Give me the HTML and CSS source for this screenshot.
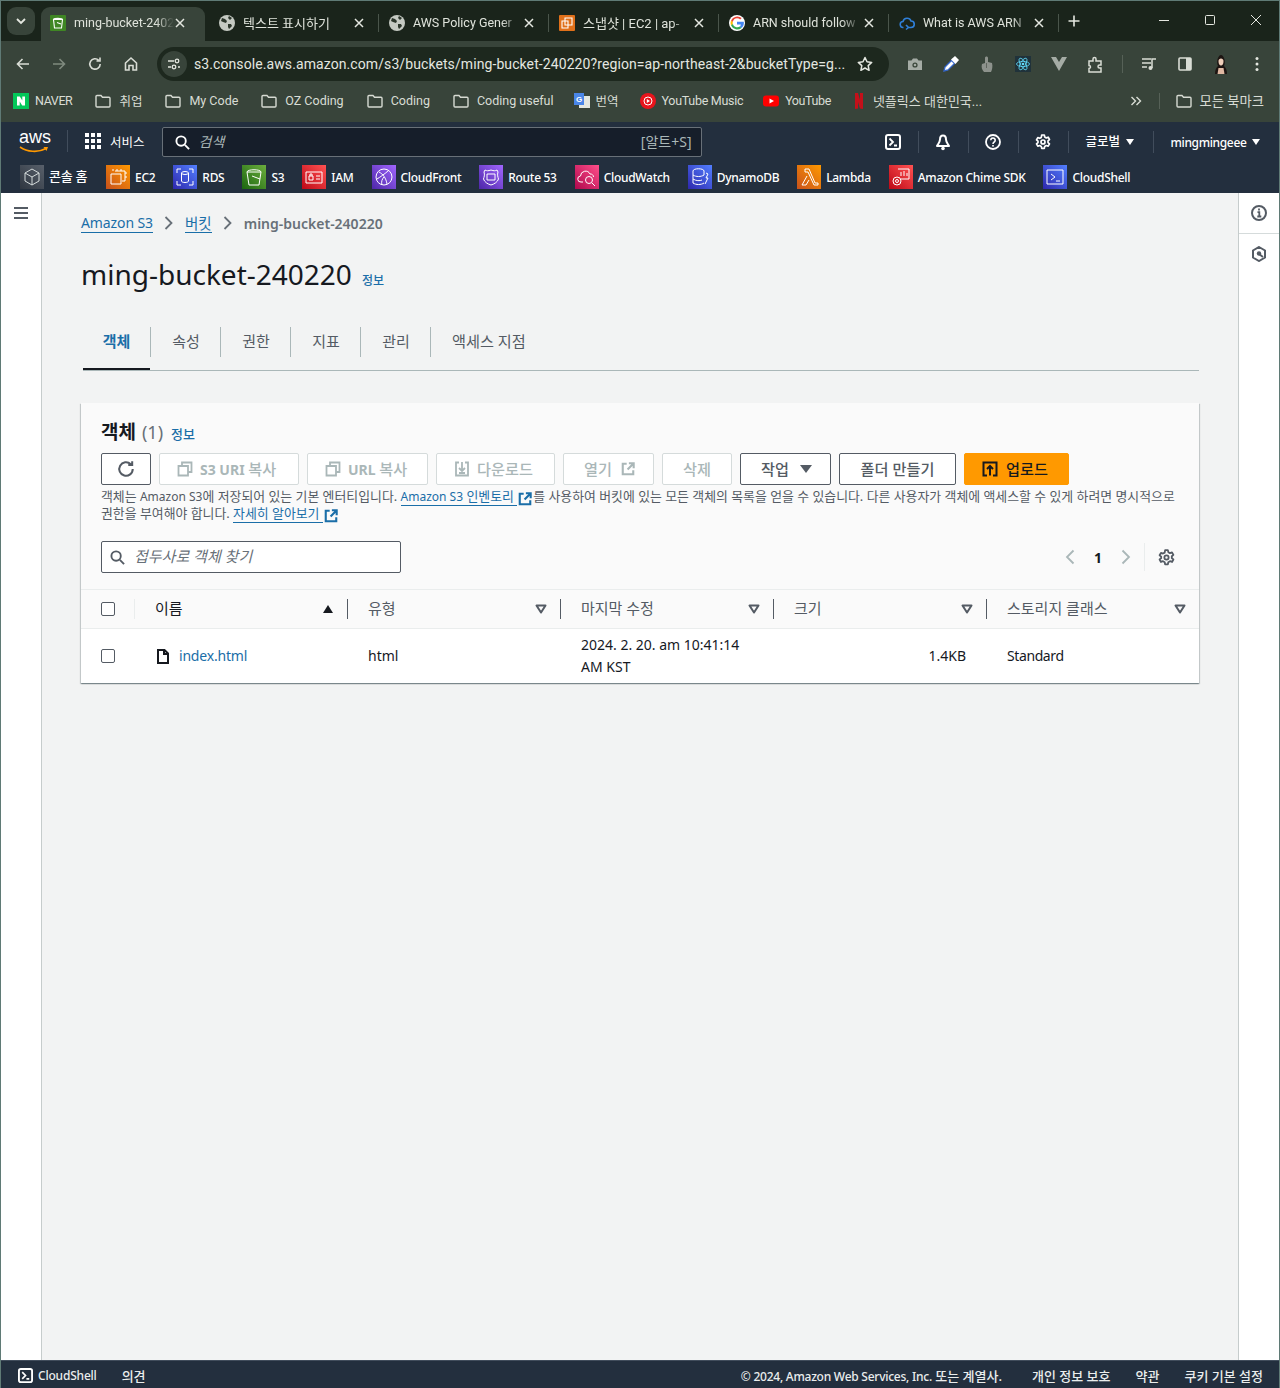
FILE: index.html
```html
<!DOCTYPE html>
<html lang="ko">
<head>
<meta charset="utf-8">
<title>ming-bucket-240220</title>
<link rel="stylesheet" href="styles.css">
</head>
<body>
<svg class="defs" width="0" height="0" aria-hidden="true">
  <defs>
    <symbol id="globe" viewBox="0 0 16 16"><circle cx="8" cy="8" r="8" fill="#c4c9c2"/><path d="M3 3l3 1 2 2-1 2-3-1-2-1zM9 9l3 0 1 2-3 3-1-2z" fill="#2a352a"/><path d="M10 1l3 2-2 2-2-2z" fill="#2a352a"/></symbol>
    <symbol id="folder" viewBox="0 0 16 14"><path d="M1 2.500A1 1 0 0 1 2 1.500h4l1.500 1.800H14a1 1 0 0 1 1 1V12a1 1 0 0 1-1 1H2a1 1 0 0 1-1-1z" fill="none" stroke="#d6dad2" stroke-width="1.400"/></symbol>
    <symbol id="close" viewBox="0 0 12 12"><path d="M2 2l8 8M10 2l-8 8" stroke="#e4e7e0" stroke-width="1.500" fill="none"/></symbol>
    <symbol id="filter" viewBox="0 0 12 10"><path d="M1.500 1.500h9L6 8.500z" fill="none" stroke="#545b64" stroke-width="2" stroke-linejoin="round"/></symbol>
    <symbol id="ext" viewBox="0 0 16 16"><path d="M6.500 2H2v12h12V9.500M9 1.500h5.500V7M14 2L7.500 8.500" fill="none" stroke="currentColor" stroke-width="2.400"/></symbol>
    <symbol id="copy" viewBox="0 0 16 16"><path d="M5 5V1.500h9.500V11H11M1.500 5H11v9.500H1.500z" fill="none" stroke="currentColor" stroke-width="1.800"/></symbol>
    <symbol id="gear" viewBox="0 0 16 16"><path d="M6.700 1h2.600l.4 2 1.600.9 1.900-.7 1.300 2.300-1.500 1.300v1.800l1.500 1.300-1.300 2.300-1.900-.7-1.600.9-.4 2H6.700l-.4-2-1.600-.9-1.900.7-1.300-2.300 1.500-1.300V7.200L1.500 5.900l1.300-2.300 1.900.7 1.600-.9z" fill="none" stroke="currentColor" stroke-width="1.700" stroke-linejoin="round"/><circle cx="8" cy="8" r="2" fill="none" stroke="currentColor" stroke-width="1.700"/></symbol>
    <symbol id="term" viewBox="0 0 16 16"><rect x="1" y="1" width="14" height="14" rx="2" fill="none" stroke="#fff" stroke-width="2"/><path d="M4.500 4.500L8 8l-3.500 3.500M9 11.500h3" fill="none" stroke="#fff" stroke-width="1.800"/></symbol>
  </defs>
</svg>

<div class="app">
  <header class="tabstrip">
    <button class="tab-menu"><svg width="10" height="7" viewBox="0 0 10 7"><path d="M1 1l4 4 4-4" fill="none" stroke="#e4e7e0" stroke-width="1.800"/></svg></button>
    <div class="tab tab-active">
      <svg class="fav" viewBox="0 0 16 16"><rect width="16" height="16" rx="1" fill="#3f8624"/><path d="M3.500 4.500h9L11.500 13h-7zM3.500 4.500c0-1.500 9-1.500 9 0M7 7.500l4 1.500" fill="none" stroke="#fff" stroke-width="1.100"/></svg>
      <span class="tab-title">ming-bucket-2402</span>
      <svg class="tab-x"><use href="#close"/></svg>
    </div>
    <div class="tab tab-first"><svg class="fav"><use href="#globe"/></svg><span class="tab-title tab-ko">텍스트 표시하기</span><svg class="tab-x"><use href="#close"/></svg></div>
    <div class="tab"><svg class="fav"><use href="#globe"/></svg><span class="tab-title">AWS Policy Gener</span><svg class="tab-x"><use href="#close"/></svg></div>
    <div class="tab"><svg class="fav" viewBox="0 0 16 16"><rect width="16" height="16" rx="1" fill="#e0701a"/><path d="M6 3h7v7H6zM3 6h6v7H3z" fill="none" stroke="#fff" stroke-width="1.100"/></svg><span class="tab-title tab-ko">스냅샷 | EC2 | ap-</span><svg class="tab-x"><use href="#close"/></svg></div>
    <div class="tab"><svg class="fav" viewBox="0 0 16 16"><circle cx="8" cy="8" r="8" fill="#fff"/><path d="M8 3.300A4.700 4.700 0 0 1 11.200 4.600L12.700 3.100A7 7 0 0 0 2 5.500L3.800 7A4.700 4.700 0 0 1 8 3.300z" fill="#ea4335"/><path d="M3.800 7L2 5.500a7 7 0 0 0 0 5L3.800 9a4.700 4.700 0 0 1 0-2z" fill="#fbbc05"/><path d="M3.800 9L2 10.500a7 7 0 0 0 10.600 2.400l-1.700-1.400A4.700 4.700 0 0 1 3.800 9z" fill="#34a853"/><path d="M14.800 6.700H8v2.800h3.900a3.400 3.400 0 0 1-1 2l1.700 1.400a7 7 0 0 0 2.200-6.200z" fill="#4285f4"/></svg><span class="tab-title">ARN should follow</span><svg class="tab-x"><use href="#close"/></svg></div>
    <div class="tab"><svg class="fav" viewBox="0 0 16 16"><path d="M4.500 12.500a3 3 0 0 1-.5-6 4.200 4.200 0 0 1 8-.5 3.200 3.200 0 0 1 0 6.500H9.500M7 10l2.500 2.500L7 14.500" fill="none" stroke="#2f7fd8" stroke-width="1.600"/></svg><span class="tab-title">What is AWS ARN</span><svg class="tab-x"><use href="#close"/></svg></div>
    <svg class="tab-plus" viewBox="0 0 16 16"><path d="M8 2.500v11M2.500 8h11" stroke="#e4e7e0" stroke-width="1.600" fill="none"/></svg>
    <div class="win-controls">
      <span class="win-btn"><svg width="12" height="12" viewBox="0 0 12 12"><path d="M1 6.500h10" stroke="#e4e7e0" fill="none"/></svg></span>
      <span class="win-btn"><svg width="12" height="12" viewBox="0 0 12 12"><rect x="1.500" y="1.500" width="9" height="9" rx="1" stroke="#e4e7e0" fill="none"/></svg></span>
      <span class="win-btn"><svg width="12" height="12" viewBox="0 0 12 12"><path d="M1 1l10 10M11 1L1 11" stroke="#e4e7e0" fill="none"/></svg></span>
    </div>
  </header>

  <div class="toolbar">
    <span class="tb-btn"><svg width="16" height="16" viewBox="0 0 16 16"><path d="M14 8H3M7.500 3L2.500 8l5 5" fill="none" stroke="#d9ddd5" stroke-width="1.600"/></svg></span>
    <span class="tb-btn"><svg width="16" height="16" viewBox="0 0 16 16"><path d="M2 8h11M8.500 3l5 5-5 5" fill="none" stroke="#7f8a7e" stroke-width="1.600"/></svg></span>
    <span class="tb-btn"><svg width="16" height="16" viewBox="0 0 16 16"><path d="M13.200 8a5.200 5.200 0 1 1-1.500-3.700M13 1.500v3.500H9.500" fill="none" stroke="#d9ddd5" stroke-width="1.600"/></svg></span>
    <span class="tb-btn"><svg width="16" height="16" viewBox="0 0 16 16"><path d="M2.500 7L8 2l5.500 5v7H10V9.500H6V14H2.500z" fill="none" stroke="#d9ddd5" stroke-width="1.600"/></svg></span>
    <div class="omnibox">
      <span class="site-info"><svg width="14" height="12" viewBox="0 0 14 12"><path d="M1 3h6M1 9h3M11 9h2" stroke="#e4e7e0" stroke-width="1.400" fill="none"/><circle cx="10" cy="3" r="1.800" stroke="#e4e7e0" stroke-width="1.300" fill="none"/><circle cx="7" cy="9" r="1.800" stroke="#e4e7e0" stroke-width="1.300" fill="none"/></svg></span>
      <span class="url">s3.console.aws.amazon.com/s3/buckets/ming-bucket-240220?region=ap-northeast-2&amp;bucketType=g...</span>
      <svg class="star" width="16" height="16" viewBox="0 0 16 16"><path d="M8 1.500l2 4.300 4.700.6-3.500 3.200.9 4.700L8 12l-4.100 2.300.9-4.700L1.300 6.400 6 5.800z" fill="none" stroke="#e4e7e0" stroke-width="1.500" stroke-linejoin="round"/></svg>
    </div>
    <span class="tb-btn"><svg width="16" height="16" viewBox="0 0 16 16"><path d="M1 4.500h3.500L6 2.500h4l1.500 2H15V14H1z" fill="#a5aca5"/><circle cx="8" cy="9" r="2.600" fill="#3a463a"/><circle cx="8" cy="9" r="1.300" fill="#a5aca5"/></svg></span>
    <span class="tb-btn"><svg width="18" height="18" viewBox="0 0 18 18"><path d="M2 16l1-4 6.500-6.500 3 3L6 15z" fill="#fff" stroke="#3566c8" stroke-width="1.300"/><path d="M9 4.500L13 1l4 4-3.500 4z" fill="#fff"/></svg></span>
    <span class="tb-btn"><svg width="14" height="18" viewBox="0 0 14 18"><path d="M5 3c0-2 3-2 3 0v4l4 1c1 3 0 7-1 9H4C2 15 1 12 2 9l3-1z" fill="#8d928c"/><path d="M6.500 8v5" stroke="#5f655e"/></svg></span>
    <span class="tb-btn"><svg width="16" height="16" viewBox="0 0 16 16"><rect width="16" height="16" fill="#20323a"/><g fill="none" stroke="#61dafb" stroke-width=".8"><ellipse cx="8" cy="8" rx="6.500" ry="2.600"/><ellipse cx="8" cy="8" rx="6.500" ry="2.600" transform="rotate(60 8 8)"/><ellipse cx="8" cy="8" rx="6.500" ry="2.600" transform="rotate(120 8 8)"/></g><circle cx="8" cy="8" r="1.300" fill="#61dafb"/></svg></span>
    <span class="tb-btn"><svg width="16" height="14" viewBox="0 0 16 14"><path d="M0 0h5l3 5 3-5h5L8 14z" fill="#a5aca5"/></svg></span>
    <span class="tb-btn"><svg width="17" height="17" viewBox="0 0 17 17"><path d="M2 5h4V3a1.500 1.500 0 0 1 3 0v2h5v4h-1.500a1.500 1.500 0 0 0 0 3H14v4H2v-3.500a1.500 1.500 0 0 0 0-3z" fill="none" stroke="#d9ddd5" stroke-width="1.500"/></svg></span>
    <span class="tb-sep"></span>
    <span class="tb-btn"><svg width="16" height="14" viewBox="0 0 16 14"><path d="M1 2h9M1 6h9M1 10h5" stroke="#d9ddd5" stroke-width="1.500" fill="none"/><path d="M11 11V2h4" stroke="#d9ddd5" stroke-width="1.500" fill="none"/><circle cx="9.500" cy="11" r="2" fill="#d9ddd5"/></svg></span>
    <span class="tb-btn"><svg width="14" height="14" viewBox="0 0 14 14"><rect x="1" y="1" width="12" height="12" rx="1" fill="none" stroke="#d9ddd5" stroke-width="1.600"/><rect x="8" y="1" width="5" height="12" fill="#d9ddd5"/></svg></span>
    <span class="tb-btn"><svg width="18" height="20" viewBox="0 0 18 20"><path d="M3 20c0-4 1-6 3-8-2-4 0-11 3-11s5 7 3 11c2 2 3 4 3 8z" fill="#1d1512"/><path d="M6.500 7c0-3.500 5-3.500 5 0s-1.300 4.500-2.500 4.500S6.500 10.500 6.500 7z" fill="#f0cfba"/><path d="M6.500 14h5l1 6h-7z" fill="#e0b8a2"/></svg></span>
    <span class="tb-btn"><svg width="4" height="16" viewBox="0 0 4 16"><circle cx="2" cy="2.500" r="1.500" fill="#e4e7e0"/><circle cx="2" cy="8" r="1.500" fill="#e4e7e0"/><circle cx="2" cy="13.500" r="1.500" fill="#e4e7e0"/></svg></span>
  </div>

  <nav class="bookmarks">
    <span class="bm bm-first"><svg class="bm-ic" viewBox="0 0 16 16"><rect width="16" height="16" fill="#03c75a"/><path d="M4 3.500h2.800L9.300 7.500v-4H12v9H9.200L6.700 8.500v4H4z" fill="#fff"/></svg>NAVER</span>
    <span class="bm"><svg class="bm-ic"><use href="#folder"/></svg>취업</span>
    <span class="bm"><svg class="bm-ic"><use href="#folder"/></svg>My Code</span>
    <span class="bm"><svg class="bm-ic"><use href="#folder"/></svg>OZ Coding</span>
    <span class="bm"><svg class="bm-ic"><use href="#folder"/></svg>Coding</span>
    <span class="bm"><svg class="bm-ic"><use href="#folder"/></svg>Coding useful</span>
    <span class="bm bm-tight bm-translate"><svg class="bm-ic" viewBox="0 0 16 16"><rect x="5" y="3" width="11" height="12" fill="#e4e7e0"/><rect width="10" height="12" fill="#4a86e8"/><text x="2" y="9" font-size="8" fill="#fff" class="svg-g">G</text></svg>번역</span>
    <span class="bm bm-tight bm-ytm"><svg class="bm-ic" viewBox="0 0 16 16"><circle cx="8" cy="8" r="8" fill="#e8141c"/><circle cx="8" cy="8" r="4" fill="none" stroke="#fff"/><path d="M6.800 6v4L10 8z" fill="#fff"/></svg>YouTube Music</span>
    <span class="bm bm-tight bm-yt"><svg class="bm-ic" viewBox="0 0 16 16"><rect y="2.500" width="16" height="11" rx="3" fill="#f00"/><path d="M6.500 5.500v5L11 8z" fill="#fff"/></svg>YouTube</span>
    <span class="bm bm-tight bm-nf"><svg class="bm-ic" viewBox="0 0 16 16"><path d="M4 0h3l2 7V0h3v16l-3-.5L7 9v6.500L4 16z" fill="#c4101a"/></svg>넷플릭스 대한민국...</span>
    <span class="bm-right">
      <svg width="12" height="10" viewBox="0 0 12 10"><path d="M1.500 1l4 4-4 4M6.500 1l4 4-4 4" fill="none" stroke="#d9ddd5" stroke-width="1.400"/></svg>
      <span class="bm-sep"></span>
      <span class="bm bm-all"><svg class="bm-ic"><use href="#folder"/></svg>모든 북마크</span>
    </span>
  </nav>

  <div class="aws-nav">
    <span class="aws-logo">
      <span class="aws-word">aws</span>
      <svg class="aws-smile" width="31" height="8" viewBox="0 0 31 8"><path d="M1 1c7 5 18 6 26 1.500" fill="none" stroke="#f90" stroke-width="1.600"/><path d="M24.500 1l4.500 0-1.500 4z" fill="#f90"/></svg>
    </span>
    <span class="nav-sep nav-sep-logo"></span>
    <span class="services">
      <svg width="16" height="16" viewBox="0 0 16 16" fill="#fff"><rect width="4" height="4"/><rect x="6" width="4" height="4"/><rect x="12" width="4" height="4"/><rect y="6" width="4" height="4"/><rect x="6" y="6" width="4" height="4"/><rect x="12" y="6" width="4" height="4"/><rect y="12" width="4" height="4"/><rect x="6" y="12" width="4" height="4"/><rect x="12" y="12" width="4" height="4"/></svg>
      서비스
    </span>
    <div class="nav-search">
      <svg width="15" height="15" viewBox="0 0 16 16"><circle cx="6.500" cy="6.500" r="5" fill="none" stroke="#fff" stroke-width="2"/><path d="M10.500 10.500L15 15" stroke="#fff" stroke-width="2"/></svg>
      <em class="nav-search-ph">검색</em>
      <span class="nav-search-key">[알트+S]</span>
    </div>
    <div class="nav-right">
      <span class="nav-ic"><svg width="16" height="16"><use href="#term"/></svg></span>
      <span class="nav-ic nav-ic-line"><svg width="16" height="17" viewBox="0 0 16 17"><path d="M8 1.500c2 0 3 2 3 4 0 2.500 2 4.500 3 6.500H2c1-2 3-4 3-6.500 0-2 1-4 3-4z" fill="none" stroke="#fff" stroke-width="2" stroke-linejoin="round"/><circle cx="8" cy="14.500" r="1.800" fill="#fff"/></svg></span>
      <span class="nav-ic nav-ic-line"><svg width="16" height="16" viewBox="0 0 16 16"><circle cx="8" cy="8" r="7" fill="none" stroke="#fff" stroke-width="1.800"/><path d="M5.800 6.200a2.200 2.200 0 1 1 3.400 1.800C8.300 8.600 8 9 8 10" fill="none" stroke="#fff" stroke-width="1.600"/><rect x="7.200" y="11" width="1.600" height="1.600" fill="#fff"/></svg></span>
      <span class="nav-ic nav-ic-line"><svg class="gear-white" width="16" height="16"><use href="#gear"/></svg></span>
      <span class="nav-text nav-region"><span class="nav-region-label">글로벌</span><i class="tri"></i></span>
      <span class="nav-text nav-user">mingmingeee<i class="tri"></i></span>
    </div>
  </div>

  <div class="aws-services">
    <span class="svc"><span class="svc-ic svc-gray"><svg viewBox="0 0 24 24"><path d="M12 4l7 4v8l-7 4-7-4V8zM5 8l7 4 7-4M12 12v8" fill="none" stroke="#d5dbdb"/></svg></span><span class="svc-ko">콘솔 홈</span></span>
    <span class="svc"><span class="svc-ic svc-orange"><svg viewBox="0 0 24 24"><path d="M9 6h10v10h-3M5 9h10v10H5zM7 4v2M11 4v2M15 4v2M21 8h-2M21 12h-2" fill="none" stroke="#fff"/></svg></span>EC2</span>
    <span class="svc"><span class="svc-ic svc-blue"><svg viewBox="0 0 24 24"><ellipse cx="12" cy="8" rx="3.500" ry="1.500" fill="none" stroke="#fff"/><path d="M8.500 8v8c0 2 7 2 7 0V8M4 8V4h4M20 8V4h-4M4 16v4h4M20 16v4h-4" fill="none" stroke="#fff"/></svg></span>RDS</span>
    <span class="svc"><span class="svc-ic svc-green"><svg viewBox="0 0 24 24"><path d="M5 7h14l-2 13H7zM5 7c0-3 14-3 14 0M10 11l8 3" fill="none" stroke="#fff"/></svg></span>S3</span>
    <span class="svc"><span class="svc-ic svc-red"><svg viewBox="0 0 24 24"><path d="M4 7h16v11H4zM7 11h4v4H7zM8 11V9h2v2M14 11h4M14 14h4" fill="none" stroke="#fff"/></svg></span>IAM</span>
    <span class="svc"><span class="svc-ic svc-purple"><svg viewBox="0 0 24 24"><circle cx="12" cy="12" r="8" fill="none" stroke="#fff"/><path d="M7 7c4 2 7 6 8 12M5 14c3-2 8-5 12-9M10 20c-1-3 0-6 2-8" fill="none" stroke="#fff"/></svg></span>CloudFront</span>
    <span class="svc"><span class="svc-ic svc-purple"><svg viewBox="0 0 24 24"><path d="M6 5c2 1 3 1 6 0 3 1 4 1 6 0l1 2c-1 3 0 5 .5 7-1 3-4 5-7.500 6-3.500-1-6.500-3-7.500-6 .5-2 1.500-4 .5-7z" fill="none" stroke="#fff"/><path d="M8 9h8v6H8z" fill="none" stroke="#fff"/></svg></span>Route 53</span>
    <span class="svc"><span class="svc-ic svc-pink"><svg viewBox="0 0 24 24"><path d="M8 17H6a3 3 0 0 1-.5-6 5 5 0 0 1 9.500-2 3 3 0 0 1 3.500 3" fill="none" stroke="#fff"/><circle cx="14" cy="15" r="3.500" fill="none" stroke="#fff"/><path d="M17 18l3 3" stroke="#fff"/></svg></span>CloudWatch</span>
    <span class="svc"><span class="svc-ic svc-blue"><svg viewBox="0 0 24 24"><path d="M5 6c0-3 11-3 11 0v4c-3 2-8 2-11 0zM5 10v8c3 2 8 2 11 0M5 14c3 2 7 2 9 1M18 8l2 1-2 4h2l-3 6" fill="none" stroke="#fff"/></svg></span>DynamoDB</span>
    <span class="svc"><span class="svc-ic svc-orange"><svg viewBox="0 0 24 24"><path d="M8 4h4l6 14h3v2h-4L11 7H8zM10 11l-5 9h4l3-5" fill="none" stroke="#fff"/></svg></span>Lambda</span>
    <span class="svc"><span class="svc-ic svc-red"><svg viewBox="0 0 24 24"><path d="M9 4h11v10h-8M12 7v4M15 6v5M18 8v3" fill="none" stroke="#fff"/><circle cx="8" cy="16" r="4" fill="none" stroke="#fff"/><circle cx="8" cy="16" r="1.500" fill="none" stroke="#fff"/></svg></span>Amazon Chime SDK</span>
    <span class="svc"><span class="svc-ic svc-blue"><svg viewBox="0 0 24 24"><path d="M4 5h16v14H4zM8 9l4 3-4 3M13 16h4" fill="none" stroke="#fff"/></svg></span>CloudShell</span>
  </div>

  <main class="workspace">
    <aside class="side-left">
      <svg width="14" height="12" viewBox="0 0 14 12"><path d="M0 1h14M0 6h14M0 11h14" stroke="#545b64" stroke-width="2"/></svg>
    </aside>
    <section class="content">
      <div class="crumbs">
        <a class="crumb-link crumb-lat">Amazon S3</a>
        <svg class="crumb-sep" width="10" height="14" viewBox="0 0 10 14"><path d="M1.500 1l6 6-6 6" fill="none" stroke="#687078" stroke-width="1.800"/></svg>
        <a class="crumb-link crumb-ko">버킷</a>
        <svg class="crumb-sep" width="10" height="14" viewBox="0 0 10 14"><path d="M1.500 1l6 6-6 6" fill="none" stroke="#687078" stroke-width="1.800"/></svg>
        <span class="crumb-cur">ming-bucket-240220</span>
      </div>
      <div class="page-head">
        <h1>ming-bucket-240220</h1>
        <a class="info">정보</a>
      </div>
      <div class="tabs">
        <span class="pg-tab pg-tab-on">객체</span>
        <span class="pg-tab">속성</span>
        <span class="pg-tab">권한</span>
        <span class="pg-tab">지표</span>
        <span class="pg-tab">관리</span>
        <span class="pg-tab pg-tab-last">액세스 지점</span>
      </div>

      <div class="card">
        <div class="card-head">
          <div class="card-title"><h2>객체</h2><span class="count">(1)</span><a class="info">정보</a></div>
          <div class="actions">
            <button class="btn btn-refresh"><svg width="18" height="18" viewBox="0 0 16 16"><path d="M14 8a6 6 0 1 1-1.800-4.300M13.500 1v3.500H10" fill="none" stroke="#545b64" stroke-width="1.800"/></svg></button>
            <button class="btn btn-off btn-s3"><svg width="16" height="16"><use href="#copy"/></svg><span>S3 URI <span class="ko">복사</span></span></button>
            <button class="btn btn-off btn-url"><svg width="16" height="16"><use href="#copy"/></svg><span>URL <span class="ko">복사</span></span></button>
            <button class="btn btn-off btn-dl"><svg width="16" height="16" viewBox="0 0 16 16"><path d="M5 1.500H2v13h12v-13h-3M8 1v8.500M5 7l3 3 3-3M5 12h6" fill="none" stroke="currentColor" stroke-width="1.800"/></svg><span class="ko">다운로드</span></button>
            <button class="btn btn-off btn-open"><span class="ko">열기</span><svg width="14" height="14"><use href="#ext"/></svg></button>
            <button class="btn btn-off btn-del"><span class="ko">삭제</span></button>
            <button class="btn btn-on btn-act"><span class="ko">작업</span><i class="tri-dark"></i></button>
            <button class="btn btn-on btn-new"><span class="ko">폴더 만들기</span></button>
            <button class="btn btn-primary"><svg width="16" height="16" viewBox="0 0 16 16"><path d="M5 14.500H1.500v-13h13v13H11M8 14.500V5.500M5 8l3-3 3 3" fill="none" stroke="#16191f" stroke-width="2"/></svg><span class="ko">업로드</span></button>
          </div>
          <p class="desc">객체는 <span class="lat">Amazon S3</span>에 저장되어 있는 기본 엔터티입니다. <a><span class="lat">Amazon S3</span> 인벤토리 </a><svg class="ext-ic" width="14" height="14"><use href="#ext"/></svg>를 사용하여 버킷에 있는 모든 객체의 목록을 얻을 수 있습니다. 다른 사용자가 객체에 액세스할 수 있게 하려면 명시적으로 권한을 부여해야 합니다. <a>자세히 알아보기 </a><svg class="ext-ic" width="14" height="14"><use href="#ext"/></svg></p>
          <div class="filter-row">
            <div class="filter-input">
              <svg width="15" height="15" viewBox="0 0 16 16"><circle cx="6.500" cy="6.500" r="5" fill="none" stroke="#545b64" stroke-width="2"/><path d="M10.500 10.500L15 15" stroke="#545b64" stroke-width="2"/></svg>
              <em>접두사로 객체 찾기</em>
            </div>
            <div class="pager">
              <svg width="10" height="16" viewBox="0 0 10 16"><path d="M8.500 1.500L2 8l6.500 6.500" fill="none" stroke="#aab7b8" stroke-width="1.800"/></svg>
              <b class="page-no">1</b>
              <svg width="10" height="16" viewBox="0 0 10 16"><path d="M1.500 1.500L8 8l-6.500 6.500" fill="none" stroke="#aab7b8" stroke-width="1.800"/></svg>
              <span class="pager-sep"></span>
              <svg class="pager-gear" width="16" height="16"><use href="#gear"/></svg>
            </div>
          </div>
        </div>
        <div class="table">
          <div class="tr th">
            <span class="td td-check"><i class="check"></i></span>
            <span class="td td-head td-dark">이름<i class="sort-up"></i></span>
            <span class="td td-head">유형<svg class="flt"><use href="#filter"/></svg></span>
            <span class="td td-head">마지막 수정<svg class="flt"><use href="#filter"/></svg></span>
            <span class="td td-head">크기<svg class="flt"><use href="#filter"/></svg></span>
            <span class="td td-head td-end">스토리지 클래스<svg class="flt"><use href="#filter"/></svg></span>
          </div>
          <div class="tr tb">
            <span class="td td-check"><i class="check"></i></span>
            <span class="td td-name"><svg width="12" height="15" viewBox="0 0 12 15"><path d="M1 1h6.500L11 4.500V14H1zM7 1v4h4" fill="none" stroke="#16191f" stroke-width="2"/></svg><a>index.html</a></span>
            <span class="td td-plain">html</span>
            <span class="td td-date">2024. 2. 20. am 10:41:14<br>AM KST</span>
            <span class="td td-plain td-size">1.4KB</span>
            <span class="td td-plain td-class">Standard</span>
          </div>
        </div>
      </div>
    </section>
    <aside class="side-right">
      <span class="side-cell"><svg width="16" height="16" viewBox="0 0 16 16"><circle cx="8" cy="8" r="7" fill="none" stroke="#545b64" stroke-width="2"/><path d="M8 3.500v2M6.500 7.200H8.300V11.500M6.300 11.500h4" fill="none" stroke="#545b64" stroke-width="1.800"/></svg></span>
      <span class="side-cell"><svg width="16" height="16" viewBox="0 0 16 16"><path d="M8 1l6 3.500v7L8 15l-6-3.500v-7z" fill="none" stroke="#545b64" stroke-width="2"/><circle cx="8" cy="7.500" r="2.200" fill="#545b64"/><path d="M8 8l4 3" stroke="#545b64" stroke-width="2"/></svg></span>
    </aside>
  </main>

  <footer class="footer">
    <span class="foot-cs"><svg width="15" height="15"><use href="#term"/></svg>CloudShell</span>
    <span class="foot-fb">의견</span>
    <span class="foot-copy"><span class="foot-lat">© 2024, Amazon Web Services, Inc.</span> 또는 계열사.</span>
    <span class="foot-link">개인 정보 보호</span>
    <span class="foot-link">약관</span>
    <span class="foot-link">쿠키 기본 설정</span>
  </footer>
</div>
</body>
</html>
```

FILE: styles.css
```css
* { box-sizing: border-box; }
html, body { margin: 0; padding: 0; height: 100%; }
body {
  font-family: "Noto Sans", "Noto Sans CJK KR", sans-serif;
  font-size: 14px;
  color: #16191f;
  background: #f2f3f3;
  overflow: hidden;
}
.defs { display: block; height: 0; }
a { color: #1a6ea8; }
button { font-family: inherit; }
em { font-style: italic; }

.app {
  height: 1388px;
  display: flex;
  flex-direction: column;
  border-left: 1px solid #5f7a75;
  border-right: 1px solid #5f7a75;
}

/* browser chrome */
.tabstrip {
  height: 41px;
  flex: none;
  display: flex;
  align-items: flex-end;
  padding-left: 6px;
  background: #1a241b;
  border-top: 1px solid #5f7a75;
  font-family: Roboto, "Noto Sans CJK KR", sans-serif;
  font-size: 12.500px;
  color: #dfe3db;
}
.tab-menu {
  width: 28px;
  height: 28px;
  margin: 0 6px 6px 0;
  padding: 0;
  border: 0;
  border-radius: 9px;
  background: #38443a;
  display: flex;
  align-items: center;
  justify-content: center;
}
.tab {
  width: 170px;
  height: 34px;
  padding: 0 0 3px 10px;
  display: flex;
  align-items: center;
  flex: none;
  position: relative;
}
.tab::after {
  content: "";
  width: 1px;
  height: 18px;
  background: #4a554b;
  margin-left: 11px;
}
.tab-active {
  width: 164px;
  margin-right: 4px;
  padding-left: 9px;
  background: #38443a;
  border-radius: 9px 9px 0 0;
}
.tab-active::after { display: none; }
.fav { width: 16px; height: 16px; flex: none; margin-right: 8px; }
.tab-title {
  width: 108px;
  flex: none;
  overflow: hidden;
  white-space: nowrap;
  -webkit-mask-image: linear-gradient(90deg, #000 82%, transparent 100%);
  mask-image: linear-gradient(90deg, #000 82%, transparent 100%);
}
.tab-ko { font-size: 13px; }
.tab-active .tab-title { width: 100px; }
.tab-active .tab-x { margin-left: 0; }
.tab-x { width: 12px; height: 12px; margin: 0 2px; flex: none; }
.tab-plus { width: 16px; height: 16px; margin: 0 0 12px 7px; flex: none; }
.win-controls { margin-left: auto; display: flex; align-self: stretch; }
.win-btn { width: 46px; display: flex; align-items: center; justify-content: center; padding-bottom: 3px; }

.toolbar {
  height: 42px;
  flex: none;
  display: flex;
  align-items: center;
  padding: 4px 0 0 4px;
  background: #38443a;
}
.tb-btn { width: 36px; height: 34px; flex: none; display: flex; align-items: center; justify-content: center; }
.tb-sep { width: 1px; height: 18px; background: #566157; margin: 0 8px 0 9px; flex: none; }
.omnibox {
  width: 732px;
  height: 34px;
  margin: 0 8px;
  flex: none;
  display: flex;
  align-items: center;
  padding-left: 4px;
  border-radius: 17px;
  background: #1d281e;
}
.site-info {
  width: 26px;
  height: 26px;
  margin-right: 7px;
  border-radius: 50%;
  background: #38443a;
  display: flex;
  align-items: center;
  justify-content: center;
}
.url {
  font-family: Roboto, sans-serif;
  font-size: 14px;
  letter-spacing: .09px;
  color: #e4e7e0;
  white-space: nowrap;
  width: 663px;
}
.star { flex: none; }

.bookmarks {
  height: 39px;
  flex: none;
  display: flex;
  align-items: center;
  padding: 0 0 4px 12px;
  gap: 23px;
  background: #38443a;
  font-family: Roboto, "Noto Sans CJK KR", sans-serif;
  font-size: 12.500px;
  color: #d9ddd5;
}
.bm { display: flex; align-items: center; gap: 8px; white-space: nowrap; }
.bm-first { gap: 6px; letter-spacing: -.4px; }
.bm-tight { gap: 6px; }
.bm-translate { margin-left: -3px; }
.bm-ytm { margin-left: -2px; letter-spacing: -.3px; }
.bm-yt { margin-left: -3px; letter-spacing: -.4px; }
.bm-nf { margin-left: -3px; font-size: 13px; }
.bm-all { font-size: 13.300px; }
.bm-ic { width: 16px; height: 16px; flex: none; }
.svg-g { font-family: "Liberation Sans", sans-serif; font-weight: 700; }
.bm-right { margin-left: auto; display: flex; align-items: center; padding-right: 15px; }
.bm-sep { width: 1px; height: 16px; background: #566157; margin: 0 16px 0 17px; }

/* aws console header */
.aws-nav {
  height: 38px;
  flex: none;
  display: flex;
  align-items: center;
  padding-left: 18px;
  background: #232f3e;
  color: #fff;
  font-size: 12px;
}
.aws-logo { width: 31px; height: 26px; position: relative; display: block; }
.aws-word {
  display: block;
  font-size: 18px;
  line-height: 18px;
  font-family: "Liberation Sans", sans-serif;
  text-align: center;
}
.aws-smile { display: block; }
.nav-sep { width: 1px; height: 22px; background: #414d5c; }
.nav-sep-logo { margin: 0 17px; }
.services { display: flex; align-items: center; gap: 9px; font-size: 12.500px; }
.nav-search {
  width: 540px;
  height: 30px;
  margin: 2px 0 0 17px;
  padding: 0 9px 0 12px;
  display: flex;
  align-items: center;
  background: #161e2a;
  border: 1px solid #687078;
  border-radius: 2px;
}
.nav-search-ph { margin-left: 9px; padding-bottom: 2px; color: #aab7b8; font-size: 14px; }
.nav-search-key { margin-left: auto; padding-bottom: 2px; color: #aab7b8; font-size: 14px; }
.nav-right { display: flex; align-items: center; margin: 2px 0 0 166px; }
.nav-ic { width: 50px; height: 22px; display: flex; align-items: center; justify-content: center; flex: none; }
.nav-ic-line { border-left: 1px solid #414d5c; }
.gear-white { color: #fff; }
.nav-text { display: flex; align-items: center; height: 22px; border-left: 1px solid #414d5c; font-weight: 500; }
.nav-region { width: 85px; padding-left: 17px; font-size: 12.500px; }
.nav-region-label { padding-bottom: 3px; }
.nav-user { padding-left: 17px; letter-spacing: -.35px; }
.tri {
  width: 0;
  height: 0;
  margin-left: 6px;
  border: 4.500px solid transparent;
  border-top: 6px solid #fff;
  border-bottom: 0;
}

.aws-services {
  height: 33px;
  flex: none;
  display: flex;
  align-items: flex-start;
  gap: 18px;
  padding: 5px 0 0 19px;
  background: #232f3e;
  color: #fff;
  font-size: 12px;
  font-weight: 500;
  letter-spacing: -.3px;
}
.svc { display: flex; align-items: center; gap: 5px; white-space: nowrap; }
.svc-ko { font-size: 13px; padding-bottom: 3px; margin-right: 1px; }
.svc-ic { width: 24px; height: 24px; flex: none; display: block; }
.svc-ic svg { display: block; width: 24px; height: 24px; }
.svc-gray { background: linear-gradient(45deg, #2f3640, #58606b); }
.svc-orange { background: linear-gradient(45deg, #c8511b, #f90); }
.svc-blue { background: linear-gradient(45deg, #2e27ad, #527fff); }
.svc-green { background: linear-gradient(45deg, #1b660f, #6cae3e); }
.svc-red { background: linear-gradient(45deg, #bd0816, #ff5252); }
.svc-purple { background: linear-gradient(45deg, #4d27a8, #a166ff); }
.svc-pink { background: linear-gradient(45deg, #b0084d, #ff4f8b); }

/* page */
.workspace { flex: 1; min-height: 0; display: flex; background: #f2f3f3; }
.side-left {
  width: 41px;
  flex: none;
  padding: 14px 0 0 13px;
  background: #fff;
  border-right: 1px solid #c6cccc;
}
.side-left svg { display: block; }
.side-right {
  width: 41px;
  flex: none;
  background: #fff;
  border-left: 1px solid #c6cccc;
}
.side-cell { height: 41px; display: flex; align-items: center; justify-content: center; border-bottom: 1px solid #d5dbdb; }
.side-cell:last-child { height: 40px; border-bottom: 0; }
.content { flex: 1; min-width: 0; padding: 20px 39px 0; }

.crumbs { display: flex; align-items: center; height: 20px; font-size: 14px; }
.crumb-link { color: #1a6ea8; border-bottom: 1px solid #1a6ea8; line-height: 18px; }
.crumb-lat { letter-spacing: -.1px; }
.crumb-ko { font-size: 14.500px; }
.crumb-sep { margin: 0 11px; }
.crumb-cur { color: #687078; font-weight: 600; }
.page-head { display: flex; align-items: baseline; gap: 10px; margin-top: 21px; height: 40px; }
h1 { margin: 0; font-size: 28px; line-height: 40px; font-weight: 400; letter-spacing: 0; }
.info { color: #1a6ea8; font-size: 12px; font-weight: 500; }
.tabs {
  display: flex;
  align-items: flex-start;
  height: 44px;
  margin: 33px 0 0 2px;
  border-bottom: 1px solid #aab7b8;
}
.pg-tab {
  width: 70px;
  height: 30px;
  padding: 0 0 4px 1px;
  display: flex;
  align-items: center;
  justify-content: center;
  color: #545b64;
  font-size: 15px;
  position: relative;
  border-right: 1px solid #aab7b8;
}
.pg-tab-last { width: auto; padding: 0 21px 4px; border: 0; white-space: nowrap; font-size: 15.200px; }
.pg-tab-on { width: 68px; padding-left: 0; color: #1a6ea8; font-weight: 700; }
.pg-tab-on::after {
  content: "";
  position: absolute;
  left: 0;
  right: 0;
  top: 41px;
  height: 2px;
  background: #16191f;
}

.card {
  margin-top: 32px;
  background: #fff;
  box-shadow: 0 1px 1px 0 rgba(0,28,36,.3), 1px 1px 1px 0 rgba(0,28,36,.15), -1px 1px 1px 0 rgba(0,28,36,.15);
}
.card-head { background: #fafafa; padding: 16px 20px; height: 186px; }
.card-title { display: flex; align-items: baseline; height: 26px; }
h2 { margin: 0; font-size: 19px; line-height: 26px; font-weight: 700; }
.count { margin-left: 6px; font-size: 18px; color: #687078; }
.card-title .info { margin-left: 8px; font-size: 13px; }
.actions { display: flex; gap: 8px; margin-top: 8px; }
.btn {
  height: 32px;
  padding: 0;
  display: flex;
  align-items: center;
  justify-content: center;
  gap: 7px;
  border: 1px solid #545b64;
  border-radius: 2px;
  background: #fff;
  color: #545b64;
  font-size: 14px;
  font-weight: 700;
  white-space: nowrap;
}
.btn > span { padding-bottom: 3px; }
.ko { font-size: 15.200px; font-weight: 500; }
.btn-off { border-color: #d5dbdb; color: #aab7b8; }
.btn-refresh { width: 50px; }
.btn-s3, .btn-url, .btn-dl, .btn-primary { justify-content: flex-start; padding-left: 17px; }
.btn-s3 { width: 140px; }
.btn-url { width: 121px; }
.btn-dl { width: 119px; }
.btn-open { width: 91px; gap: 9px; padding-left: 2px; }
.btn-del { width: 70px; }
.btn-act { width: 91px; gap: 11px; padding-left: 2px; }
.btn-new { width: 117px; }
.btn-primary { width: 105px; gap: 8px; background: #f90; border-color: #f90; color: #16191f; }
.tri-dark {
  width: 0;
  height: 0;
  border: 6px solid transparent;
  border-top: 8px solid #545b64;
  border-bottom: 0;
}
.desc { margin: 3px 0 0; height: 32px; font-size: 12.900px; line-height: 16px; color: #545b64; width: 1082px; }
.lat { font-size: 12px; }
.desc a { color: #1a6ea8; border-bottom: 1px solid #1a6ea8; }
.ext-ic { color: #1a6ea8; vertical-align: -3px; margin: -2px 1px; }
.filter-row { display: flex; align-items: center; justify-content: space-between; margin-top: 21px; }
.filter-input {
  width: 300px;
  height: 32px;
  display: flex;
  align-items: center;
  gap: 9px;
  padding-left: 8px;
  background: #fff;
  border: 1px solid #545b64;
  border-radius: 2px;
}
.filter-input em { color: #687078; font-size: 15px; padding-bottom: 3px; }
.pager { display: flex; align-items: center; margin-right: 4px; color: #687078; }
.page-no { margin: 0 19px; color: #16191f; font-size: 14px; }
.pager-sep { width: 1px; height: 28px; background: #eaeded; margin: 0 13px 0 13px; }
.pager-gear { color: #545b64; width: 17px; height: 17px; }

.tr { display: grid; grid-template-columns: 54px 213px 213px 213px 213px 212px; align-items: center; }
.th { height: 40px; background: #fafafa; border-top: 1px solid #eaeded; border-bottom: 1px solid #eaeded; }
.tb { height: 54px; background: #fff; }
.td { padding: 0 0 0 20px; display: block; }
.td-check { padding-left: 20px; display: flex; }
.td-head {
  height: 20px;
  line-height: 18px;
  display: flex;
  align-items: center;
  justify-content: space-between;
  padding-right: 13px;
  padding-bottom: 2px;
  border-right: 1px solid #545b64;
  color: #545b64;
  font-size: 15px;
}
.th .td-check { height: 20px; align-items: center; border-right: 1px solid #eaeded; }
.td-dark { color: #16191f; }
.td-end { border-right: 0; }
.check {
  display: block;
  width: 14px;
  height: 14px;
  background: #fff;
  border: 1px solid #545b64;
  border-radius: 2px;
}
.flt { width: 12px; height: 10px; flex: none; margin-top: 2px; }
.sort-up {
  width: 0;
  height: 0;
  border: 5px solid transparent;
  border-bottom: 8px solid #16191f;
  border-top: 0;
  margin: 2px 1px 0 0;
}
.td-name { display: flex; align-items: center; gap: 10px; padding-left: 22px; }
.td-name a { color: #1a6ea8; letter-spacing: -.2px; padding-bottom: 2px; }
.td-plain { padding-bottom: 2px; }
.td-date { line-height: 22px; }
.td-size { text-align: right; padding-right: 21px; }
.td-class { letter-spacing: -.4px; }

.footer {
  height: 28px;
  flex: none;
  display: flex;
  align-items: center;
  padding: 1px 16px 0 17px;
  background: #232f3e;
  color: #eaeded;
  font-size: 13px;
  font-weight: 500;
  border-top: 1px solid #414d5c;
}
.foot-cs { display: flex; align-items: center; gap: 5px; font-size: 12px; letter-spacing: -.2px; }
.foot-fb { margin-left: 25px; }
.foot-copy { margin-left: auto; }
.foot-lat { font-size: 12px; letter-spacing: -.25px; }
.foot-link { margin-left: 25px; }
.foot-copy + .foot-link { margin-left: 30px; }
```
